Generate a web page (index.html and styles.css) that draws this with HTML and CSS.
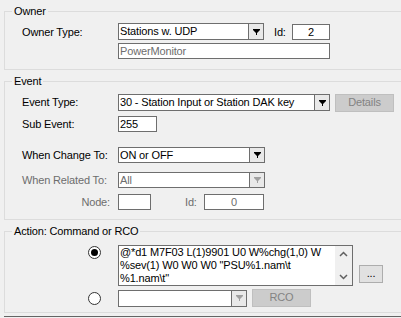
FILE: index.html
```html
<!DOCTYPE html>
<html>
<head>
<meta charset="utf-8">
<link rel="stylesheet" href="styles.css">
</head>
<body>
<div class="page">
  <fieldset class="group">
    <legend>Owner</legend>
    <div class="content owner">
      <div class="row">
        <div class="lbl">Owner Type:</div>
        <div class="combo w146 h17">
          <div class="val">Stations w. UDP</div>
          <div class="btn"><svg width="7" height="6" viewBox="0 0 7 6"><polygon points="0,0 7,0 7,1 4,4 4,6 3,6 3,4 0,1" fill="#000"/></svg></div>
        </div>
        <div class="idlbl owner-id">Id:</div>
        <div class="box w38 h16 center">2</div>
      </div>
      <div class="row r2">
        <div class="lbl"></div>
        <div class="box w212 h16 grey">PowerMonitor</div>
      </div>
    </div>
  </fieldset>

  <fieldset class="group g2">
    <legend>Event</legend>
    <div class="content event">
      <div class="row top">
        <div class="lbl lh17">Event Type:</div>
        <div class="combo w212 h17">
          <div class="val">30 - Station Input or Station DAK key</div>
          <div class="btn"><svg width="7" height="6" viewBox="0 0 7 6"><polygon points="0,0 7,0 7,1 4,4 4,6 3,6 3,4 0,1" fill="#000"/></svg></div>
        </div>
        <div class="button disabled details">Details</div>
      </div>
      <div class="row sub">
        <div class="lbl">Sub Event:</div>
        <div class="box w39 h16">255</div>
      </div>
      <div class="row change">
        <div class="lbl">When Change To:</div>
        <div class="combo w147 h16">
          <div class="val">ON or OFF</div>
          <div class="btn"><svg width="7" height="6" viewBox="0 0 7 6"><polygon points="0,0 7,0 7,1 4,4 4,6 3,6 3,4 0,1" fill="#000"/></svg></div>
        </div>
      </div>
      <div class="row related">
        <div class="lbl grey">When Related To:</div>
        <div class="combo w147 h16">
          <div class="val grey">All</div>
          <div class="btn"><svg width="7" height="6" viewBox="0 0 7 6"><polygon points="0,0 7,0 7,1 4,4 4,6 3,6 3,4 0,1" fill="#a0a0a0"/></svg></div>
        </div>
      </div>
      <div class="row node">
        <div class="lbl grey right">Node:</div>
        <div class="box w33 h16"></div>
        <div class="idlbl grey event-id">Id:</div>
        <div class="box w60 h16 center grey">0</div>
      </div>
    </div>
  </fieldset>

  <fieldset class="group g3">
    <legend>Action: Command or RCO</legend>
    <div class="content action">
      <div class="row top">
        <div class="lbl radio-cell"><span class="radio checked"></span></div>
        <div class="memo">
          <div class="memo-text">@*d1 M7F03 L(1)9901 U0 W%chg(1,0) W<br>%sev(1) W0 W0 W0 "PSU%1.nam\t<br>%1.nam\t"</div>
          <div class="scroll">
            <svg width="9" height="6" viewBox="0 0 9 6"><polyline points="1,5 4.5,1.5 8,5" fill="none" stroke="#606060" stroke-width="1.5"/></svg>
            <svg width="9" height="6" viewBox="0 0 9 6"><polyline points="1,1 4.5,4.5 8,1" fill="none" stroke="#606060" stroke-width="1.5"/></svg>
          </div>
        </div>
        <div class="button dots">...</div>
      </div>
      <div class="row rco-row">
        <div class="lbl radio-cell"><span class="radio"></span></div>
        <div class="combo w129 h17">
          <div class="val"></div>
          <div class="btn"><svg width="7" height="6" viewBox="0 0 7 6"><polygon points="0,0 7,0 7,1 4,4 4,6 3,6 3,4 0,1" fill="#a0a0a0"/></svg></div>
        </div>
        <div class="button disabled rco">RCO</div>
      </div>
    </div>
  </fieldset>
  <div class="next"></div>
</div>
</body>
</html>
```

FILE: styles.css
```css
html, body {
  margin: 0;
  padding: 0;
}
body {
  background: #f0f0f0;
  font-family: "Liberation Sans", Arial, sans-serif;
  font-size: 11px;
  letter-spacing: -0.15px;
  color: #000;
  width: 401px;
  height: 318px;
  overflow: hidden;
}
.page {
  padding: 5px 0 0 4px;
  width: 397px;
}
.group {
  border: 1px solid #dcdcdc;
  border-right: none;
  margin: 0;
  padding: 0;
  min-width: 0;
  width: 397px;
  box-sizing: border-box;
}
.g2, .g3 {
  margin-top: 5px;
}
legend {
  margin-left: 7px;
  padding: 0 2px;
  line-height: 13px;
  height: 13px;
}
.content {
  padding-left: 17px;
}
.owner { padding-top: 5px; padding-bottom: 10px; }
.event { padding-top: 6px; padding-bottom: 9px; }
.action { padding-top: 7px; padding-bottom: 5px; }

.row {
  display: flex;
  align-items: center;
}
.row.top { align-items: flex-start; }
.r2 { margin-top: 3px; }
.sub { margin-top: 4px; }
.change { margin-top: 15px; }
.related { margin-top: 9px; }
.node { margin-top: 6px; }
.rco-row { margin-top: 3px; }

.lbl {
  width: 96px;
  flex: none;
  white-space: nowrap;
}
.lh17 { line-height: 17px; }
.right {
  text-align: right;
  padding-right: 8px;
  box-sizing: border-box;
}
.grey { color: #6d6d6d; }

.box, .combo {
  box-sizing: border-box;
  border: 1px solid #6e6e6e;
  background: #fff;
  flex: none;
}
.box {
  padding-left: 1px;
  line-height: 14px;
  white-space: nowrap;
}
.center { text-align: center; padding-left: 0; }
.h16 { height: 16px; }
.h17 { height: 17px; }
.w33 { width: 33px; }
.w38 { width: 38px; }
.w39 { width: 39px; }
.w60 { width: 60px; }
.w129 { width: 129px; }
.w146 { width: 146px; }
.w147 { width: 147px; }
.w212 { width: 212px; }

.combo {
  display: flex;
}
.combo .val {
  flex: 1;
  padding-left: 1px;
  white-space: nowrap;
  overflow: hidden;
  line-height: 14px;
}
.combo.h17 .val { line-height: 15px; }
.combo .btn {
  width: 14px;
  border-left: 1px solid #6e6e6e;
  background: #e9e9e9;
  display: flex;
  align-items: center;
  justify-content: center;
}

.idlbl { flex: none; }
.owner-id { margin-left: 10px; width: 18px; }
.event-id { margin-left: 34px; width: 19px; }

.button {
  box-sizing: border-box;
  height: 18px;
  border: 1px solid #adadad;
  background: #e1e1e1;
  text-align: center;
  line-height: 15px;
  flex: none;
}
.button.disabled {
  background: #cccccc;
  border-color: #bfbfbf;
  color: #838383;
}
.details { width: 59px; margin-left: 5px; }
.rco { width: 59px; margin-left: 5px; }
.dots { width: 24px; margin-left: 6px; margin-top: 20px; line-height: 14px; }

.radio-cell {
  display: flex;
  justify-content: flex-end;
  padding-right: 17px;
  box-sizing: border-box;
}
.top .radio-cell { padding-top: 1px; }
.radio {
  display: block;
  width: 13px;
  height: 13px;
  box-sizing: border-box;
  border: 1px solid #333;
  border-radius: 50%;
  background: #fff;
  position: relative;
}
.radio.checked::after {
  content: "";
  position: absolute;
  left: 2px;
  top: 2px;
  width: 7px;
  height: 7px;
  border-radius: 50%;
  background: #000;
}

.memo {
  box-sizing: border-box;
  width: 235px;
  height: 41px;
  border: 1px solid #6e6e6e;
  background: #fff;
  display: flex;
  flex: none;
}
.memo-text {
  flex: 1;
  padding: 0 0 0 1px;
  line-height: 13px;
  white-space: nowrap;
  overflow: hidden;
}
.scroll {
  width: 17px;
  background: #f0f0f0;
  display: flex;
  flex-direction: column;
  justify-content: space-between;
  align-items: center;
  padding: 5px 0 5px;
}
.scroll svg { display: block; }

.next {
  margin-top: 3px;
  border-top: 1px solid #646464;
  height: 10px;
}
```
